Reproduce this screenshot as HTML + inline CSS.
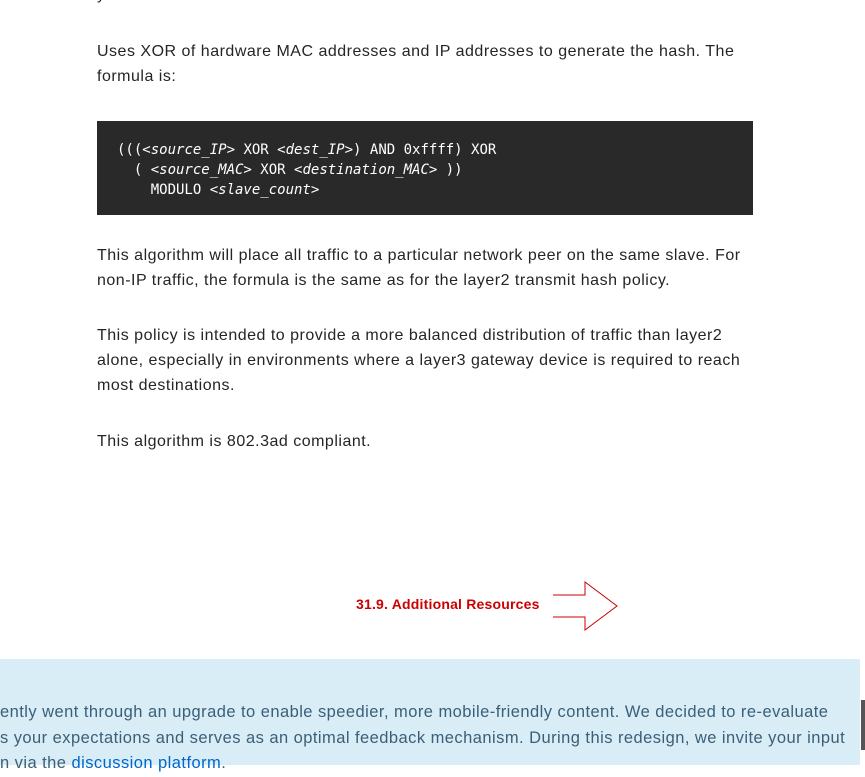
<!DOCTYPE html>
<html><head><meta charset="utf-8"><style>
body{margin:0;width:865px;height:765px;overflow:hidden;background:#fff;position:relative;font-family:"Liberation Sans",sans-serif;color:#252525}
.p{position:absolute;left:97px;width:700px;font-size:16px;line-height:25px;margin:0;letter-spacing:0.5px;white-space:nowrap}
pre{position:absolute;left:97px;top:121px;width:616px;height:54px;margin:0;padding:19px 20px 21px;background:#292929;color:#fff;font-family:"DejaVu Sans Mono","Liberation Mono",monospace;font-size:14px;line-height:20px}
pre i{font-style:italic}
.band{position:absolute;left:0;top:659px;width:860px;height:106px;background:#d9edf6}
.bt{position:absolute;left:0;top:700px;white-space:nowrap;font-size:16.5px;line-height:25.5px;color:#3b5f78;letter-spacing:0.45px}
.bt a{color:#0066cc}
</style></head><body>
<div style="position:absolute;left:97px;top:-14px;font-size:16px">y</div>
<p class="p" style="top:39px">Uses XOR of hardware MAC addresses and IP addresses to generate the hash. The<br>formula is:</p>
<pre>(((<i>&lt;source_IP&gt;</i> XOR <i>&lt;dest_IP&gt;</i>) AND 0xffff) XOR
  ( <i>&lt;source_MAC&gt;</i> XOR <i>&lt;destination_MAC&gt;</i> ))
    MODULO <i>&lt;slave_count&gt;</i></pre>
<p class="p" style="top:243px">This algorithm will place all traffic to a particular network peer on the same slave. For<br>non-IP traffic, the formula is the same as for the layer2 transmit hash policy.</p>
<p class="p" style="top:323px">This policy is intended to provide a more balanced distribution of traffic than layer2<br>alone, especially in environments where a layer3 gateway device is required to reach<br>most destinations.</p>
<p class="p" style="top:429px">This algorithm is 802.3ad compliant.</p>
<div style="position:absolute;left:356px;top:596px;font-size:14px;font-weight:bold;color:#cc0000;letter-spacing:0.2px">31.9. Additional Resources</div>
<svg style="position:absolute;left:0;top:0" width="865" height="765"><path d="M553 595H585V582L617 606L585 630V617H553" fill="none" stroke="#cc0000" stroke-width="1"/></svg>
<div class="band"></div>
<div class="bt">ently went through an upgrade to enable speedier, more mobile-friendly content. We decided to re-evaluate<br>s your expectations and serves as an optimal feedback mechanism. During this redesign, we invite your input<br>n via the <a>discussion platform</a>.</div>
<div style="position:absolute;left:861px;top:700px;width:4px;height:50px;background:#555"></div>
</body></html>
